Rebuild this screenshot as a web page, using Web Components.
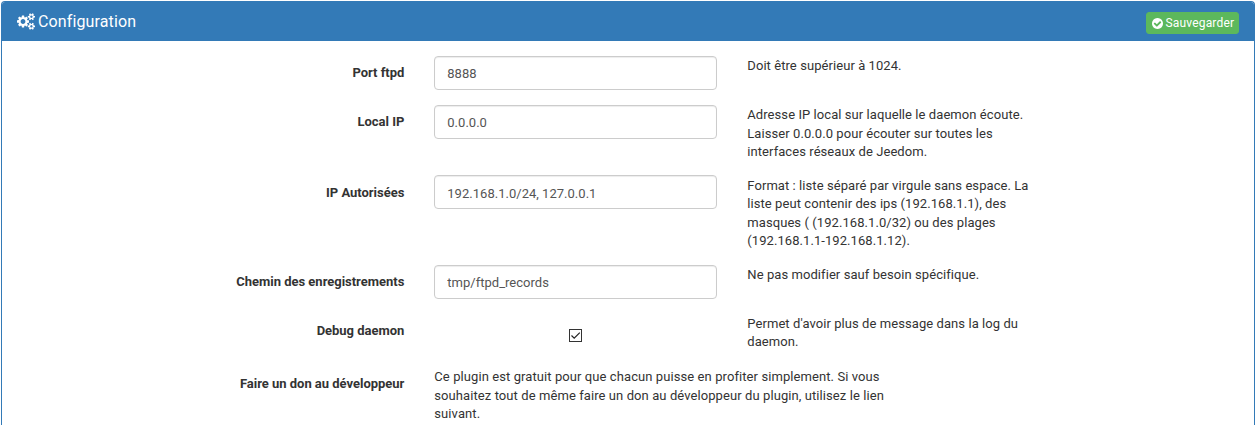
<!DOCTYPE html>
<html lang="fr">
<head>
<meta charset="utf-8">
<title>Configuration</title>
<style>
html{background:#fff}
body{margin:0;height:425px;overflow:hidden;font:13px/18.57px Roboto,"Liberation Sans",sans-serif;color:#333}
</style>
</head>
<body>
<config-panel>
  <span slot="title">Configuration</span>
  <save-button slot="action">Sauvegarder</save-button>
  <form-row label="Port ftpd"><text-field value="8888"></text-field><span slot="help">Doit être supérieur à 1024.</span></form-row>
  <form-row label="Local IP"><text-field value="0.0.0.0"></text-field><span slot="help">Adresse IP local sur laquelle le daemon écoute.<br>Laisser 0.0.0.0 pour écouter sur toutes les<br>interfaces réseaux de Jeedom.</span></form-row>
  <form-row label="IP Autorisées"><text-field value="192.168.1.0/24, 127.0.0.1"></text-field><span slot="help">Format : liste séparé par virgule sans espace. La<br>liste peut contenir des ips (192.168.1.1), des<br>masques ( (192.168.1.0/32) ou des plages<br>(192.168.1.1-192.168.1.12).</span></form-row>
  <form-row label="Chemin des enregistrements"><text-field value="tmp/ftpd_records"></text-field><span slot="help">Ne pas modifier sauf besoin spécifique.</span></form-row>
  <form-row label="Debug daemon"><check-field></check-field><span slot="help">Permet d'avoir plus de message dans la log du<br>daemon.</span></form-row>
  <form-row label="Faire un don au développeur" wide>Ce plugin est gratuit pour que chacun puisse en profiter simplement. Si vous<br>souhaitez tout de même faire un don au développeur du plugin, utilisez le lien<br>suivant.</form-row>
</config-panel>
<script>
const define = (name, html, init) => customElements.define(name, class extends HTMLElement {
  constructor() {
    super();
    this.attachShadow({mode: 'open'}).innerHTML = html;
  }
  connectedCallback() { if (init) init(this, this.shadowRoot); }
});

define('config-panel', `
<style>
:host{display:block;box-sizing:border-box;margin:1px 2px 0 1px;height:424px;border:1px solid #337ab7;border-bottom:0;border-radius:4px 4px 0 0;background:#fff}
header{display:flex;align-items:center;justify-content:space-between;box-sizing:border-box;height:39px;padding:0 15px;background:#337ab7;color:#fff;border-radius:3px 3px 0 0}
h3{display:flex;align-items:center;gap:3px;margin:0;font-size:16px;font-weight:400;line-height:18px;letter-spacing:.13px}
svg{display:block;width:18px;height:17px;fill:currentColor}
main{padding-top:14.7px}
</style>
<header><h3><svg viewBox="0 0 1920 1792"><path d="M896 896q0-106-75-181t-181-75-181 75-75 181 75 181 181 75 181-75 75-181zm768 512q0-52-38-90t-90-38-90 38-38 90q0 53 37.5 90.5t90.5 37.5 90.5-37.5 37.5-90.5zm0-1024q0-52-38-90t-90-38-90 38-38 90q0 53 37.5 90.5t90.5 37.5 90.5-37.5 37.5-90.5zm-384 421v185q0 10-7 19.5t-16 10.5l-155 24q-11 35-32 76 34 48 90 115 7 11 7 20 0 12-7 19-23 30-82.5 89.5t-78.5 59.5q-11 0-21-7l-115-90q-37 19-77 31-11 108-23 155-7 24-30 24h-186q-11 0-20-7.5t-10-17.5l-23-153q-34-10-75-31l-118 89q-7 7-20 7-11 0-21-8-144-133-144-160 0-9 7-19 10-14 41-53t47-61q-23-44-35-82l-152-24q-10-1-17-9.5t-7-19.5v-185q0-10 7-19.5t16-10.5l155-24q11-35 32-76-34-48-90-115-7-11-7-20 0-12 7-20 22-30 82-89t79-59q11 0 21 7l115 90q34-18 77-32 11-108 23-154 7-24 30-24h186q11 0 20 7.5t10 17.5l23 153q34 10 75 31l118-89q8-7 20-7 11 0 21 8 144 133 144 160 0 8-7 19-12 16-42 54t-45 60q23 48 34 82l152 23q10 2 17 10.5t7 19.5zm640 533v140q0 16-149 31-12 27-30 52 51 113 51 138 0 4-4 7-122 71-124 71-8 0-46-47t-52-68q-20 2-30 2t-30-2q-14 21-52 68t-46 47q-2 0-124-71-4-3-4-7 0-25 51-138-18-25-30-52-149-15-149-31v-140q0-16 149-31 13-29 30-52-51-113-51-138 0-4 4-7 4-2 35-20t59-34 30-16q8 0 46 46.5t52 67.5q20-2 30-2t30 2q51-71 92-112l6-2q4 0 124 70 4 3 4 7 0 25-51 138 17 23 30 52 149 15 149 31zm0-1024v140q0 16-149 31-12 27-30 52 51 113 51 138 0 4-4 7-122 71-124 71-8 0-46-47t-52-68q-20 2-30 2t-30-2q-14 21-52 68t-46 47q-2 0-124-71-4-3-4-7 0-25 51-138-18-25-30-52-149-15-149-31v-140q0-16 149-31 13-29 30-52-51-113-51-138 0-4 4-7 4-2 35-20t59-34 30-16q8 0 46 46.5t52 67.5q20-2 30-2t30 2q51-71 92-112l6-2q4 0 124 70 4 3 4 7 0 25-51 138 17 23 30 52 149 15 149 31z"/></svg><slot name="title"></slot></h3><slot name="action"></slot></header>
<main><slot></slot></main>`);

define('save-button', `
<style>
:host{display:block;margin-top:3px}
button{display:flex;align-items:center;gap:2.5px;box-sizing:border-box;width:93px;height:22px;margin:0;padding:0 5px;border:1px solid #5cb85c;border-radius:3px;background:#5cb85c;color:#fff;font:12px/18px Roboto,"Liberation Sans",sans-serif;letter-spacing:.17px;white-space:nowrap}
svg{display:block;flex:none;width:11px;height:11px;fill:currentColor}
</style>
<button type="button"><svg viewBox="128 128 1536 1536"><path d="M1412 734q0-28-18-46l-91-90q-19-19-45-19t-45 19l-408 407-226-226q-19-19-45-19t-45 19l-91 90q-18 18-18 46 0 27 18 45l362 362q19 19 45 19 27 0 46-19l543-543q18-18 18-45zm252 162q0 209-103 385.5t-279.5 279.5-385.5 103-385.5-103-279.5-279.5-103-385.5 103-385.5 279.5-279.5 385.5-103 385.5 103 279.5 279.5 103 385.5z"/></svg><span><slot></slot></span></button>`);

define('form-row', `
<style>
:host{display:grid;grid-template-columns:402.3px 283px 283px;column-gap:30px;margin-bottom:15px;white-space:nowrap}
:host([wide]){grid-template-columns:402.3px 491px;letter-spacing:.085px;margin-bottom:0;padding-top:1px}
:host([wide]) .help{display:none}
:host([wide]) div{padding-top:1.3px}
label{padding-top:8.2px;text-align:right;font-weight:700;letter-spacing:-.02px}
.help{padding-top:1.3px;margin-bottom:-1.3px;letter-spacing:.07px}
</style>
<label></label><div><slot></slot></div><div class="help"><slot name="help"></slot></div>`,
(el, root) => { root.querySelector('label').textContent = el.getAttribute('label'); });

define('text-field', `
<style>
:host{display:block}
input{display:block;box-sizing:border-box;width:100%;height:34px;margin:0;padding:7px 12px 5px;border:1px solid #ccc;border-radius:4px;background:#fff;box-shadow:inset 0 1px 1px rgba(0,0,0,.075);color:#555;font:13px/18.57px Roboto,"Liberation Sans",sans-serif;letter-spacing:.02px}
</style>
<input type="text">`,
(el, root) => { root.querySelector('input').value = el.getAttribute('value'); });

define('check-field', `
<style>
:host{display:flex;justify-content:center;height:34px;align-items:center}
span{display:block;box-sizing:border-box;width:13px;height:13px;margin-top:9px;border:1px solid #333;background:#fff}
svg{display:block;width:11px;height:11px;fill:none;stroke:#222;stroke-width:1.2}
</style>
<span role="checkbox" aria-checked="true"><svg viewBox="0 0 11 11"><path d="M1.5 5.5 4.2 8.2 9.8 2.6"/></svg></span>`);
</script>
</body>
</html>
